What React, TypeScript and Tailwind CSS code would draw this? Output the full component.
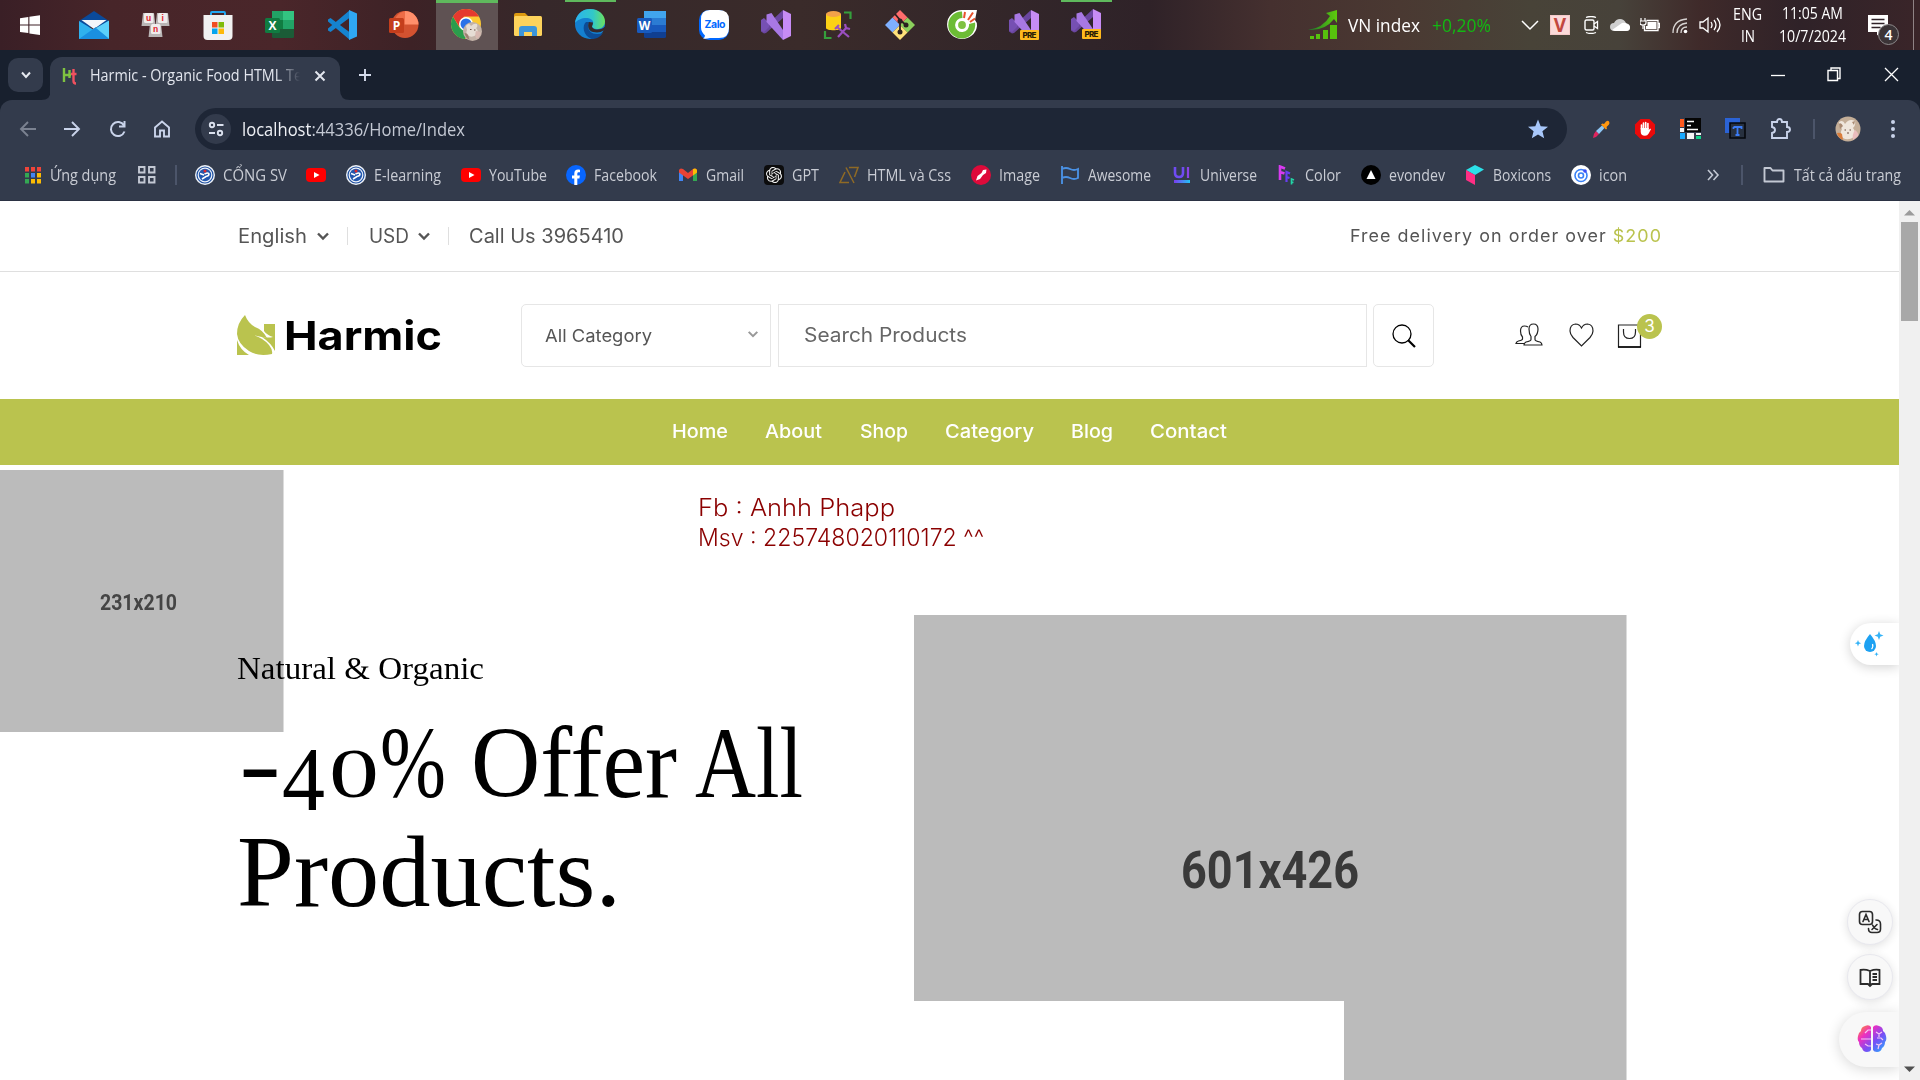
import { useLayoutEffect, useRef } from "react";
import type { ReactNode } from "react";
import { SiOpenai } from "react-icons/si";

/* One line of text condensed or widened to a fixed width. */
function Fit({ w, className = "", children }: { w: number; className?: string; children: ReactNode }) {
  const ref = useRef<HTMLSpanElement>(null);
  useLayoutEffect(() => {
    const el = ref.current;
    if (!el) return;
    el.style.transform = "none";
    const natural = el.getBoundingClientRect().width;
    el.style.transform = `scaleX(${w / natural})`;
  }, [w]);
  return (
    <span className={"block shrink-0 whitespace-nowrap " + className} style={{ width: w }}>
      <span ref={ref} className="inline-block origin-left">
        {children}
      </span>
    </span>
  );
}

function Ic({ s = 30, vb, children, className = "" }: { s?: number; vb?: string; children: ReactNode; className?: string }) {
  return (
    <svg width={s} height={s} viewBox={vb ?? `0 0 ${s} ${s}`} fill="none" className={"shrink-0 " + className}>
      {children}
    </svg>
  );
}

/* ---------- Taskbar ---------- */

const Windows = () => (
  <Ic s={22}>
    <path fill="#fff" d="M1 4.2 9.3 3v7.5H1zM10.4 2.8 21 1.2v9.3H10.4zM1 11.6h8.3v7.5L1 18zM10.4 11.6H21V21l-10.6-1.6z" />
  </Ic>
);
const Mail = () => (
  <Ic>
    <path fill="#0a4a9a" d="M0 11 15 1l15 10v6H0z" />
    <path fill="#2fb1ee" d="M0 11l15 9 15-9v18H0z" />
    <path fill="#f3f6fa" d="M2.5 10h25L15 19z" />
    <path fill="#1a8fe0" d="M0 29 17 17 30 29z" />
    <path fill="#5bd0fb" d="M17 18 30 10.500v18z" />
  </Ic>
);
const Key = ({ x, y, c }: { x: number; y: number; c: string }) => (
  <g>
    <path d={`M${x + 1} ${y}h11l1.500 13h-14z`} fill="#b9b5b5" />
    <rect x={x + 2} y={y} width="9.500" height="10" rx="1.500" fill="#efecec" />
    <text x={x + 6.7} y={y + 7.5} fontSize="8.500" fontWeight="700" textAnchor="middle" fill="#e0202a" fontFamily="Liberation Sans, sans-serif">{c}</text>
  </g>
);
const Unikey = () => (
  <Ic>
    <Key x={1} y={3} c="u" />
    <Key x={15} y={3} c="i" />
    <Key x={8} y={14} c="n" />
  </Ic>
);
const Store = () => (
  <Ic>
    <path d="M8 6V3.200Q8 2 9 2h12q1 0 1 1.200V6" stroke="#23a8f2" strokeWidth="2" />
    <path d="M0.500 5h29v21q0 4-4 4h-21q-4 0-4-4z" fill="#f1f1f1" />
    <path d="M9 12h5.500v5.500H9z" fill="#f04e23" />
    <path d="M15.500 12H21v5.500h-5.500z" fill="#80bb0a" />
    <path d="M9 18.500h5.500V24H9z" fill="#05a5ee" />
    <path d="M15.500 18.500H21V24h-5.500z" fill="#fdb90a" />
  </Ic>
);
const Letter = ({ c, fill, x, y }: { c: string; fill: string; x: number; y: number }) => (
  <g>
    <rect x={x} y={y} width="15" height="15" rx="1.500" fill={fill} />
    <text x={x + 7.5} y={y + 11.6} fontSize="12" fontWeight="700" textAnchor="middle" fill="#fff" fontFamily="Open Sans, sans-serif">{c}</text>
  </g>
);
const Excel = () => (
  <Ic>
    <rect x="7" y="1" width="22" height="27" rx="1.500" fill="#1b5c37" />
    <path d="M7 1h11v9H7z" fill="#21a366" />
    <path d="M18 1h11v9H18z" fill="#33c481" />
    <path d="M7 10h11v9H7z" fill="#107c41" />
    <path d="M18 10h11v9H18z" fill="#21a366" />
    <Letter c="X" fill="#107c41" x={0} y={8} />
  </Ic>
);
const Word = () => (
  <Ic>
    <rect x="7" y="1" width="22" height="27" rx="1.500" fill="#103f91" />
    <path d="M7 1h22v7H7z" fill="#41a5ee" />
    <path d="M7 8h22v7H7z" fill="#2b7cd3" />
    <path d="M7 15h22v7H7z" fill="#185abd" />
    <Letter c="W" fill="#185abd" x={0} y={8} />
  </Ic>
);
const VSCode = () => (
  <Ic>
    <path fill="#1583cf" d="M1 9.500 3.500 8 23 22.500V30L1 11.500z" />
    <path fill="#1583cf" d="M1 20.500 3.500 22 23 7.500V0L1 18.500z" />
    <path fill="#2fa7f2" d="M22 0l8 3.500v23L22 30z" />
  </Ic>
);
const PowerPoint = () => (
  <Ic>
    <circle cx="16" cy="14.500" r="13.500" fill="#d35230" />
    <path d="M16 1a13.500 13.500 0 0 1 13.500 13.500H16z" fill="#ff8f6b" />
    <path d="M16 1v13.500H5A13.500 13.500 0 0 1 16 1z" fill="#ed6c47" />
    <Letter c="P" fill="#c43e1c" x={0} y={8} />
  </Ic>
);
const Chrome = () => (
  <Ic s={32}>
    <circle cx="16" cy="15" r="15" fill="#fcc934" />
    <path d="M3 7.500A15 15 0 0 0 15 30l7-11-6-4-6.500 3.500z" fill="#2a9d4d" />
    <path d="M3 7.500a15 15 0 0 1 26 0H14L9.500 18z" fill="#e5392f" />
    <circle cx="16" cy="15" r="7" fill="#fff" />
    <circle cx="16" cy="15" r="5.500" fill="#2a72e8" />
    <circle cx="22.500" cy="22.500" r="9.500" fill="#c3b3a8" />
    <path d="M16 17q3-4 5 0 3-3 6-2 1 3-1 4 3 3 1 6-4 4-8 2-4-2-2-6z" fill="#e6ddd5" />
    <path d="M14.500 24q3 0 4 3l1 4q-4-2-5-7z" fill="#9c7f70" />
    <path d="M26 22q4 0 5 2-1 4-4 6-3-3-1-8z" fill="#d8b9b2" />
    <path d="M20 20.500h1.500M24 21h1.500" stroke="#6b5147" strokeWidth="1.200" />
  </Ic>
);
const Explorer = () => (
  <Ic>
    <path d="M1 5q0-2 2-2h9l3 3v4H1z" fill="#dc9a10" />
    <rect x="1" y="6" width="28" height="20" rx="1.500" fill="#fdd35c" />
    <path d="M6 26v-7q0-3 3-3h12q3 0 3 3v7h-5v-4H11v4z" fill="#3c95da" />
  </Ic>
);
const Edge = () => (
  <Ic>
    <defs>
      <linearGradient id="edgeTop" x1="0" x2="1">
        <stop stopColor="#2bb3ee" />
        <stop offset=".6" stopColor="#32c8c8" />
        <stop offset="1" stopColor="#6be15e" />
      </linearGradient>
    </defs>
    <circle cx="15" cy="15" r="15" fill="#1480d0" />
    <path d="M0 14C1 6 7 0 15 0c9 0 15 6 15 12.500 0 5-4 7.500-8 7.500-3 0-5-1-5-2.500 0-1 1.200-1.500 1.200-4S15 9 11 9 2 11 0 14z" fill="url(#edgeTop)" />
    <path d="M11 13c-4 3-3.500 14 6 17 5 0 9-3 11-6-9 3-15-1-15-7 0-2 .5-3 1.500-4z" fill="#0c4c96" />
    <path d="M14 13c-2 4-.5 9 4 10 4 1 8 .5 10.500-1.500L31 25v-9c-2 4-6 4.500-9 4.500-3 0-5-1.500-5-3 0-1 1-2 1-4z" fill="#36292a" />
  </Ic>
);
const Zalo = () => (
  <Ic>
    <rect x="0" y="0" width="30" height="30" rx="10" fill="#0068ff" />
    <path d="M11 0h9q10 0 10 10v8q0 10-10 10h-9q-4 1-7 .5 2-1 2-3-4-4-4-8V10Q1.500 0 11 0z" fill="#fff" />
    <text x="16" y="17.500" fontSize="10.500" fontWeight="700" textAnchor="middle" textLength="21" fill="#0068ff" fontFamily="Inter, sans-serif">Zalo</text>
  </Ic>
);
const VisualStudio = ({ pre = false }: { pre?: boolean }) => (
  <Ic>
    <path d="M22 0v8L5 23l-2 .500-3-2V19l6-4z" fill="#6a469f" />
    <path d="M0 10 3 8l5 5v4l-5 5-3-1.500z" fill="#7650b3" />
    <path d="M5.500 4.500 10.500 3 22 20v10L5.500 12z" fill="#a878e4" />
    <path d="M22 0l8 4v22l-8 4z" fill="#c78cf5" />
    {pre && (
      <g>
        <rect x="11" y="20" width="19" height="10" rx="1" fill="#ffb91d" />
        <text x="20.500" y="28" fontSize="8" fontWeight="800" textAnchor="middle" textLength="14" fill="#2a1c05" fontFamily="Inter, sans-serif">PRE</text>
      </g>
    )}
  </Ic>
);
const Ssms = () => (
  <Ic>
    <path d="M3 4v14c0 3 15 3 15 0V4z" fill="#fcd116" />
    <ellipse cx="10.500" cy="4" rx="7.500" ry="3" fill="#f2a24a" />
    <path d="M21 2.500h6.500V9M2 21v7h6.500" stroke="#35a03c" strokeWidth="2.200" />
    <path d="M14 17l12 10M24 17 15 27M12 19l4-4M22 14l1 4 4 1" stroke="#9a4fc0" strokeWidth="2.200" />
  </Ic>
);
const Git = () => (
  <Ic>
    <path d="M15 0l7.500 7.500L15 15 7.500 7.500z" fill="#ff6d6d" />
    <path d="M7.500 7.500 15 15l-7.500 7.500L0 15z" fill="#7fb0ff" />
    <path d="M22.500 7.500 30 15l-7.500 7.500L15 15z" fill="#8bd05c" />
    <path d="M15 15l7.500 7.500L15 30l-7.500-7.500z" fill="#ffe27a" />
    <path d="M10 4l5 6v13M15 10l6 5" stroke="#2b2020" strokeWidth="1.800" />
    <circle cx="15" cy="11" r="2.500" fill="#2b2020" />
    <circle cx="21" cy="15" r="2.500" fill="#2b2020" />
    <circle cx="15" cy="22" r="2.500" fill="#2b2020" />
  </Ic>
);
const CocCoc = () => (
  <Ic>
    <path d="M15 0h15l-2 10q2 2 2 6A15 14.500 0 1 1 15 0z" fill="#fff" />
    <path d="M15 1.500a13.500 13.500 0 1 0 13 11l-6 1.500a7 7 0 1 1-6.500-6z" fill="#6cbc35" />
    <circle cx="15" cy="15" r="5" stroke="#fff" strokeWidth="2.200" fill="#7fc241" />
    <path d="M17 8l1-6M21 10l5-7.500M23 12l5-3.500" stroke="#e8522d" strokeWidth="2" />
  </Ic>
);

type App = { icon: ReactNode; active?: boolean; open?: boolean };
const apps: App[] = [
  { icon: <Mail /> },
  { icon: <Unikey /> },
  { icon: <Store /> },
  { icon: <Excel /> },
  { icon: <VSCode /> },
  { icon: <PowerPoint /> },
  { icon: <Chrome />, active: true },
  { icon: <Explorer /> },
  { icon: <Edge />, open: true },
  { icon: <Word /> },
  { icon: <Zalo /> },
  { icon: <VisualStudio /> },
  { icon: <Ssms /> },
  { icon: <Git /> },
  { icon: <CocCoc /> },
  { icon: <VisualStudio pre /> },
  { icon: <VisualStudio pre />, open: true },
];

function Taskbar() {
  return (
    <div className="flex h-[50px] bg-[linear-gradient(90deg,#3a1f26_0,#472529_110px,#4a262a_280px,#3d2226_410px,#36282a_540px,#3a2b2a_800px,#302429_1090px,#2f2228_1150px,#45302f_1270px,#4a3932_1400px,#484338_1530px,#47423a_1620px,#3f2a2a_1700px,#2f2228_1800px,#3a2529_1920px)] font-['Open_Sans',sans-serif] text-white">
      <div className="flex w-[64px] items-center justify-center pr-[4px]">
        <Windows />
      </div>
      {apps.map((a, i) => (
        <div
          key={i}
          className={
            "flex w-[62px] items-center justify-center border-t-[3px] pb-[3px] pr-[2px] " +
            (a.active ? "border-[#5fb95d] bg-[#5f5253]" : "border-transparent")
          }
        >
          {a.open ? (
            <div className="-mt-[3px] flex h-[50px] w-[51px] items-center justify-center border-t-[3px] border-[#5fb95d] pb-[3px]">{a.icon}</div>
          ) : (
            a.icon
          )}
        </div>
      ))}
      <div className="ml-[191px] flex items-center">
        <Ic s={30} className="-ml-px">
          <defs>
            <linearGradient id="idx" x1="0" x2="1">
              <stop stopColor="#1c7a2c" />
              <stop offset="1" stopColor="#5fcb0c" />
            </linearGradient>
          </defs>
          <path d="M0 20Q15 18 22 6l-4-3L29 0v13l-3-4Q17 21 0 20z" fill="url(#idx)" />
          <path d="M2 26h4v3H2zM8 24h4v5H8zM15 20h5v9h-5zM22 15h7v14h-7z" fill="#57c20d" />
        </Ic>
        <Fit w={72} className="ml-[10px] text-[18px]">VN index</Fit>
        <Fit w={59} className="ml-[12px] text-[18px] text-[#12b812]">+0,20%</Fit>
        <Ic s={18} className="ml-[30px]">
          <path d="M1 5l8 8 8-8" stroke="#fff" strokeWidth="1.500" />
        </Ic>
        <div className="ml-[11px] flex h-[20px] w-[20px] items-center justify-center border border-[#f4c9c9] bg-[#fbdada] text-[19px] font-bold leading-none text-[#c2473f]">V</div>
        <Ic s={18} className="ml-[12px]">
          <path d="M4 1.500q5-2 10 0M4 16.500q5 2 10 0" stroke="#fff" strokeWidth="1.300" />
          <rect x="3" y="4" width="9" height="10" rx="1.500" stroke="#fff" strokeWidth="1.400" />
          <path d="M12 8l3.500-2.500v7L12 10" stroke="#fff" strokeWidth="1.300" />
        </Ic>
        <Ic s={20} className="ml-[10px]">
          <path d="M5 16q-5 0-5-4 0-4 4-4 2-4 6-4 4 0 6 4 4 1 4 4 0 4-4 4z" fill="#cfcfcf" />
          <path d="M2 15 12 8q3-1 5 1 3 1 3 3.500 0 3.500-4 3.500H5z" fill="#fff" />
        </Ic>
        <Ic s={20} className="ml-[10px]">
          <path d="M1 3v3M5 3v3M0 6h6v2q0 2-3 2t-3-2zM3 10v4" stroke="#fff" strokeWidth="1.200" />
          <path d="M6.500 5.500H18v10H4.500v-5M18.500 8.500h1v4h-1" stroke="#fff" strokeWidth="1.300" />
          <path d="M7.500 7H16.500v7H6v-3h1.500z" fill="#fff" />
        </Ic>
        <Ic s={18} className="ml-[11px]">
          <g stroke="#d8d4d2" strokeWidth="1.300">
            <path d="M2 17Q2 4 16 3M6 17q0-9 10-10M10 17q0-6 6-6" />
          </g>
          <circle cx="14.500" cy="15.500" r="1.800" fill="#fff" />
        </Ic>
        <Ic s={22} className="ml-[10px]">
          <path d="M1 8h3l5-4v14l-5-4H1zM12 8q2 3 0 6M15 6q4 5 0 10M18 4q6 7 0 14" stroke="#fff" strokeWidth="1.300" />
        </Ic>
      </div>
      <div className="ml-[12px] flex flex-col items-center pt-[3px] text-[15.500px] leading-[22px]">
        <Fit w={29}>ENG</Fit>
        <Fit w={14}>IN</Fit>
      </div>
      <div className="ml-[17px] flex flex-col items-center pt-[2px] text-[15.500px] leading-[22.500px]">
        <Fit w={61}>11:05 AM</Fit>
        <Fit w={67}>10/7/2024</Fit>
      </div>
      <div className="relative ml-[22px] flex w-[46px] border-r border-[#8f8385]">
        <Ic s={22} className="mt-[14px]">
          <path d="M0 1h20v17h-7l-4 3.500V18H0z" fill="#fff" />
          <path d="M3.500 5.500h13M3.500 9.500h13M3.500 13.500h9" stroke="#2f2228" strokeWidth="1.400" />
        </Ic>
        <div className="absolute left-[10px] top-[24px] flex h-[21px] w-[21px] items-center justify-center rounded-full border border-[#8d8a8c] bg-[#3b3437] text-[14px] font-semibold leading-none">4</div>
      </div>
    </div>
  );
}

/* ---------- Browser ---------- */

function TabStrip() {
  return (
    <div className="flex h-[50px] items-end bg-[#18202e]">
      <div className="mb-[8px] ml-[8px] flex h-[34px] w-[35px] items-center justify-center rounded-[10px] bg-[#333b4c]">
        <Ic s={14}>
          <path d="M3 4.500l4 4.500 4-4.500" stroke="#e6e9f0" strokeWidth="2" />
        </Ic>
      </div>
      <Ic s={10} className="-mr-px ml-[-2px]">
        <path d="M10 0v10H0Q10 10 10 0z" fill="#333b4c" />
      </Ic>
      <div className="flex h-[43px] w-[290px] items-center rounded-t-[12px] bg-[#333b4c] pb-[6px] pl-[12px] font-['Open_Sans',sans-serif] text-[15.500px] text-[#e3e6ee]">
        <Ic s={18}>
          <path d="M2 1v14M2 8h7M7.500 3v8" stroke="#7fc241" strokeWidth="2.400" />
          <path d="M11.500 2v12q0 2.500 2.500 2.500M9 7h5.500" stroke="#f0515f" strokeWidth="2.400" />
        </Ic>
        <div className="ml-[10px] w-[214px] shrink-0 pt-px [mask-image:linear-gradient(90deg,#000_186px,transparent_210px)]">
          <Fit w={212}>Harmic - Organic Food HTML Te</Fit>
        </div>
        <Ic s={14} className="ml-[9px]">
          <path d="M2.500 2.500l9 9m0-9l-9 9" stroke="#e3e6ee" strokeWidth="2" />
        </Ic>
      </div>
      <Ic s={10}>
        <path d="M0 0v10h10Q0 10 0 0z" fill="#333b4c" />
      </Ic>
      <Ic s={16} className="mb-[17px] ml-[7px]">
        <path d="M8 2v12M2 8h12" stroke="#d5dcec" strokeWidth="1.900" />
      </Ic>
      <div className="mb-[18px] ml-auto mr-[21px] flex items-center gap-[42px]">
        <Ic s={14}>
          <path d="M0 7.500h14" stroke="#fff" strokeWidth="1.300" />
        </Ic>
        <Ic s={15}>
          <path d="M1 3.500h9.500v10H1zM4 3V1h9v10.500h-2" stroke="#fff" strokeWidth="1.400" />
        </Ic>
        <Ic s={15}>
          <path d="M1 1l13 13m0-13L1 14" stroke="#fff" strokeWidth="1.300" />
        </Ic>
      </div>
    </div>
  );
}

function Toolbar() {
  return (
    <div className="flex h-[50px] items-center bg-[#333b4c] pt-[8px] font-['Open_Sans',sans-serif]">
      <Ic s={18} className="ml-[19px]">
        <path d="M17 9H2m7-7L2 9l7 7" stroke="#7b8291" strokeWidth="1.900" />
      </Ic>
      <Ic s={18} className="ml-[26px]">
        <path d="M1 9h15M9 2l7 7-7 7" stroke="#c9d3ea" strokeWidth="1.900" />
      </Ic>
      <Ic s={18} className="ml-[28px]">
        <path d="M15.500 11.500A7 7 0 1 1 15 5.500M15.500 1v5.500H10" stroke="#c9d3ea" strokeWidth="2" />
      </Ic>
      <Ic s={18} className="ml-[26px]">
        <path d="M2 7.500 9 1.500l7 6v9h-5v-6H7v6H2z" stroke="#c9d3ea" strokeWidth="1.900" />
      </Ic>
      <div className="ml-[24px] flex h-[42px] w-[1372px] items-center rounded-full bg-[#1e2636] pl-[6px]">
        <div className="flex h-[30px] w-[30px] items-center justify-center rounded-full bg-[#333b4c]">
          <Ic s={18}>
            <g stroke="#dbe1ee" strokeWidth="1.900">
              <circle cx="5" cy="5" r="2.200" />
              <path d="M10 5h6.500M2 13h6" />
              <circle cx="13" cy="13" r="2.200" />
            </g>
          </Ic>
        </div>
        <Fit w={223} className="ml-[11px] text-[18.500px] text-[#c3c8d3]">
          <span className="text-[#eef0f5]">localhost</span>:44336/Home/Index
        </Fit>
        <Ic s={22} className="ml-auto mr-[18px]">
          <path d="M11 1.500l2.700 6.700 7.300.5-5.600 4.600 1.800 7L11 16.500l-6.200 3.800 1.800-7L1 8.700l7.300-.5z" fill="#a8c7fa" />
        </Ic>
      </div>
      <Ic s={20} className="ml-[24px]">
        <path d="M2 19q0-4 3-7l3 3q-2 3-6 4z" fill="#e0245e" />
        <path d="M5 12 11 6.500l2.500 2.500L8 15z" fill="#8fc7f5" />
        <path d="M10 5.500l1.500-1 1.500.5 2-2.500q2-1.500 3 0t0 3L15.500 8l.5 1.500-1 1z" fill="#ff9811" />
      </Ic>
      <Ic s={22} className="ml-[23px]">
        <path d="M6.500 1h9L21 6.500v9L15.500 21h-9L1 15.500v-9z" fill="#ea0a0a" />
        <path d="M7.500 11V7M9.500 11V5M11.700 11V4.500M13.900 11V5.500" stroke="#fff" strokeWidth="1.600" strokeLinecap="round" />
        <path d="M6.700 10h8v2l1.500-1.500.8.700-2.500 4.500q-1 2-3.500 2-4.300 0-4.300-4z" fill="#fff" />
      </Ic>
      <Ic s={22} className="ml-[24px]">
        <path d="M5 0h16v14H5z" fill="#050505" />
        <path d="M0 1h4v8H0z" fill="#ff5a1f" />
        <path d="M0 10h4v4H0zM7 15h7v6H7z" fill="#f4f4f4" />
        <path d="M0 15h5v6H0z" fill="#1aa9ff" />
        <path d="M16 15h5v2h-5z" fill="#f4f4f4" />
        <path d="M16 18h5v3h-5z" fill="#0fd58b" />
        <path d="M7 3.500h7M7 7.500h4M7 11.500h11" stroke="#fff" strokeWidth="1.300" />
      </Ic>
      <Ic s={22} className="ml-[23px]">
        <path d="M0 0h15v5H5v10H0z" fill="#2b63d6" />
        <path d="M5 5h15v15H5z" fill="#27303f" stroke="#05070c" strokeWidth="1.600" />
        <path d="M8.500 9h8v2M8.500 11V9m4 0v8m-2 0h4" stroke="#3b7bf5" strokeWidth="1.800" />
      </Ic>
      <Ic s={24} className="ml-[22px]">
        <path d="M3 5h5q0-3 2.500-3T13 5h5v5q3 0 3 2.500T18 15v6H3v-5q3-.5 3-3t-3-3z" stroke="#c9d3ea" strokeWidth="1.900" />
      </Ic>
      <div className="ml-[20px] h-[20px] w-[2px] bg-[#4c556a]" />
      <Ic s={26} className="ml-[20px]">
        <circle cx="13" cy="13" r="12.500" fill="#c4ae98" />
        <path d="M4 6q4-3 6 2 4-6 10-3 1 4-2 7 4 5 1 9-6 4-11 1-4-4-1-9-3-3-3-7z" fill="#efe6dc" />
        <path d="M2 17q3-1 5 1l1 6q-5-2-6-7z" fill="#d97d3c" />
        <path d="M20 14q4 3 3 6l-5 4q-1-6 2-10z" fill="#e9bcbc" />
        <path d="M4 8q2-2 4 2l-3 3zM17 6l3-1-1 4z" fill="#a98a72" />
        <path d="M9.500 14h1.500M14.500 14H16M12 17h2" stroke="#6b4b3c" strokeWidth="1.200" />
      </Ic>
      <Ic s={20} className="ml-[22px]">
        <g fill="#c9d3ea">
          <circle cx="10" cy="3" r="2" />
          <circle cx="10" cy="10" r="2" />
          <circle cx="10" cy="17" r="2" />
        </g>
      </Ic>
    </div>
  );
}

const YouTube = () => (
  <Ic s={20}>
    <rect x="0" y="3" width="20" height="14" rx="4" fill="#f00" />
    <path d="M8 7l5.500 3L8 13z" fill="#fff" />
  </Ic>
);
const School = () => (
  <Ic s={20}>
    <circle cx="10" cy="10" r="10" fill="#eef2f8" />
    <circle cx="10" cy="10" r="8" stroke="#1d4fa0" strokeWidth="1.200" />
    <circle cx="10" cy="10" r="6.200" fill="#2257ae" />
    <path d="M5 8.500l4 1.500M9.500 9q4-2 4.500 0 0 2-3 2.500l-4 2.500" stroke="#fff" strokeWidth="1.500" />
    <circle cx="10" cy="6" r="1.500" fill="#e02b2b" />
  </Ic>
);

const appDots = ["#f0453a", "#f0453a", "#f0453a", "#34a853", "#4285f4", "#fbbc04", "#34a853", "#fbbc04", "#fbbc04"];

function Mark({ gap, w, children, label }: { gap: number; w?: number; children: ReactNode; label?: string }) {
  return (
    <div className="flex items-center" style={{ marginLeft: gap }}>
      {children}
      {label && w && <Fit w={w} className="ml-[8px] pt-[2px]">{label}</Fit>}
    </div>
  );
}

function Bookmarks() {
  return (
    <div className="flex h-[51px] items-center border-b border-[#2b3243] bg-[#333b4c] font-['Open_Sans',sans-serif] text-[15.500px] text-[#c9ccd4]">
      <Mark gap={24} w={66} label="Ứng dụng">
        <Ic s={18}>
          {appDots.map((c, i) => (
            <rect key={i} x={1 + (i % 3) * 6} y={1 + Math.floor(i / 3) * 6} width="4" height="4.500" fill={c} />
          ))}
        </Ic>
      </Mark>
      <Mark gap={21}>
        <Ic s={20}>
          <path d="M2 2h5.500v5.500H2zM12 2h5.500v5.500H12zM2 12h5.500v5.500H2zM12 12h5.500v5.500H12z" stroke="#c3c8d3" strokeWidth="1.900" />
        </Ic>
      </Mark>
      <div className="ml-[18px] h-[20px] w-[2px] bg-[#4c556a]" />
      <Mark gap={18} w={64} label="CỔNG SV"><School /></Mark>
      <Mark gap={19}><YouTube /></Mark>
      <Mark gap={20} w={67} label="E-learning"><School /></Mark>
      <Mark gap={20} w={58} label="YouTube"><YouTube /></Mark>
      <Mark gap={19} w={63} label="Facebook">
        <Ic s={20}>
          <circle cx="10" cy="10" r="10" fill="#0866ff" />
          <path d="M8.300 20v-6.500H6v-3h2.300V8.800C8.300 6 9.700 4.600 12.200 4.600q1 0 1.800.2v2.500h-1.200c-1.200 0-1.500.6-1.500 1.600v1.600h2.600l-.5 3h-2.100V20z" fill="#fff" />
        </Ic>
      </Mark>
      <Mark gap={21} w={38} label="Gmail">
        <Ic s={20}>
          <path d="M1 5v11h4V8z" fill="#4285f4" />
          <path d="M15 8v8h4V5z" fill="#34a853" />
          <path d="M1 5q1-2.500 4-1l5 4 5-4q3-1.500 4 1v2.500L10 14 1 7.500z" fill="#ea4335" />
          <path d="M15 4q3-1.500 4 1v2.500l-4 3z" fill="#fbbc04" />
        </Ic>
      </Mark>
      <Mark gap={20} w={27} label="GPT">
        <div className="flex h-[20px] w-[20px] items-center justify-center rounded-[4px] bg-[#0c0c0d] text-[#f2f2f2]"><SiOpenai size={16} /></div>
      </Mark>
      <Mark gap={20} w={84} label="HTML và Css">
        <Ic s={20}>
          <path d="M7 2.500 15 18M6 7 1 17.500h9M10 2.500h9L15.500 12" stroke="#8f6a25" strokeWidth="1.500" />
        </Ic>
      </Mark>
      <Mark gap={20} w={41} label="Image">
        <Ic s={20}>
          <circle cx="10" cy="10" r="10" fill="#de0a3a" />
          <path d="M5 15.500l1.500-4.500 4-3 1.500-3 3.500-.5L15 8l-3 2-3 4z" fill="#fff" />
        </Ic>
      </Mark>
      <Mark gap={20} w={63} label="Awesome">
        <Ic s={20}>
          <path d="M2 1v18M2 4q4-2 8 0t8 0v9q-4 2-8 0t-8 0" stroke="#4a90e2" strokeWidth="1.900" />
        </Ic>
      </Mark>
      <Mark gap={21} w={57} label="Universe">
        <Ic s={20}>
          <defs>
            <linearGradient id="uni" x1="0" x2="1">
              <stop stopColor="#7a3bf0" />
              <stop offset="1" stopColor="#21c4f5" />
            </linearGradient>
          </defs>
          <path d="M3 2v6q0 4 4 4t4-4V2" stroke="#6f4bf2" strokeWidth="2.600" />
          <path d="M16 2v11" stroke="#8c43e8" strokeWidth="2.200" />
          <path d="M2 15h16v3H2z" fill="url(#uni)" />
        </Ic>
      </Mark>
      <Mark gap={20} w={36} label="Color">
        <Ic s={20}>
          <path d="M3 15V1.500L8 3.500M3 7l4.500 1.500" stroke="#d83af0" strokeWidth="2.600" />
          <path d="M9.500 17V7l3.500 1.500M9.500 12l3 1" stroke="#6a3df0" strokeWidth="2.200" />
          <path d="M14.500 19.500V14l2.500 1M14 17l2.500.5" stroke="#22d3a5" strokeWidth="1.600" />
        </Ic>
      </Mark>
      <Mark gap={20} w={56} label="evondev">
        <Ic s={20}>
          <circle cx="10" cy="10" r="10" fill="#000" />
          <path d="M10 5l4.500 9h-9z" fill="#fff" />
        </Ic>
      </Mark>
      <Mark gap={20} w={58} label="Boxicons">
        <Ic s={20}>
          <path d="M10 0l9 4.500L10 10 1 5z" fill="#2ce0e8" />
          <path d="M1 5l9 5v10l-9-5z" fill="#ff2e84" />
        </Ic>
      </Mark>
      <Mark gap={20} w={28} label="icon">
        <Ic s={20}>
          <circle cx="10" cy="10" r="10" fill="#fff" />
          <circle cx="10" cy="10.500" r="6" stroke="#3b82f6" strokeWidth="1.600" />
          <circle cx="10" cy="10.500" r="2.500" stroke="#3b82f6" strokeWidth="1.600" />
          <circle cx="14" cy="6" r="1.800" fill="#3b4df6" />
        </Ic>
      </Mark>
      <Ic s={14} className="ml-auto">
        <path d="M2 2l4.500 5L2 12M7.500 2 12 7l-4.500 5" stroke="#c3c8d3" strokeWidth="1.600" />
      </Ic>
      <div className="ml-[21px] mr-[20px] h-[20px] w-[2px] bg-[#4c556a]" />
      <Ic s={22}>
        <path d="M1.500 17.500V4h6l2 2.500h11v11z" stroke="#c3c8d3" strokeWidth="1.900" strokeLinejoin="round" />
      </Ic>
      <Fit w={107} className="ml-[9px] mr-[19px] pt-[2px]">Tất cả dấu trang</Fit>
    </div>
  );
}

/* ---------- Shop page ---------- */

const Caret = ({ c = "#555", s = 14 }: { c?: string; s?: number }) => (
  <Ic s={s} vb="0 0 14 14">
    <path d="M2 4.500l5 5 5-5" stroke={c} strokeWidth="2.400" />
  </Ic>
);

function TopBar() {
  return (
    <div className="flex h-[71px] items-center border-b border-[#dfdfdf] pl-[238px] pr-[237px] font-[Inter,sans-serif] text-[19.500px] text-[#555]">
      <Fit w={69} className="pt-px">English</Fit>
      <div className="ml-[9px]"><Caret /></div>
      <div className="ml-[17px] h-[18px] w-px bg-[#dfdfdf]" />
      <Fit w={40} className="ml-[21px] pt-px">USD</Fit>
      <div className="ml-[8px]"><Caret /></div>
      <div className="ml-[17px] h-[18px] w-px bg-[#dfdfdf]" />
      <Fit w={155} className="ml-[20px] pt-px">Call Us 3965410</Fit>
      <Fit w={312} className="ml-auto text-[17.500px] tracking-[1px]">
        Free delivery on order over <span className="text-[#bac34e]">$200</span>
      </Fit>
    </div>
  );
}

function SearchHeader() {
  return (
    <div className="flex h-[127px] items-center pl-[237px] font-[Inter,sans-serif]">
      <svg width="39" height="41" viewBox="0 0 39 41" className="shrink-0">
        <path d="M27 9h11v27q-4-8-13-14 7 1 11 0-6-2-9-6z" fill="#bac34e" />
        <path d="M8 0q3 8 10 12 8 3 12 11-7-1-14-3 10 3 16 10 4 5 3 9-14 3-23-3Q1 29 0 19 0 8 8 0z" fill="#bac34e" />
        <path d="M0 25q3 10 12 15H0z" fill="#bac34e" />
      </svg>
      <Fit w={158} className="ml-[8px] text-[40px] font-bold leading-[42px] text-black">Harmic</Fit>
      <div className="ml-[79px] flex h-[63px] w-[250px] items-center rounded-l-[5px] border border-[#e6e6e6] pl-[23px] pr-[11px] text-[17.500px] text-[#555]">
        <Fit w={107} className="pt-[2px]">All Category</Fit>
        <div className="ml-auto pb-[4px]"><Caret c="#999" s={12} /></div>
      </div>
      <div className="ml-[7px] flex h-[63px] w-[589px] items-center border border-[#e6e6e6] pl-[25px] text-[19.500px] text-[#666]">
        <Fit w={163}>Search Products</Fit>
      </div>
      <div className="ml-[6px] flex h-[63px] w-[61px] items-center justify-center rounded-[5px] border border-[#e6e6e6]">
        <Ic s={24}>
          <circle cx="10" cy="10" r="9" stroke="#000" strokeWidth="1.300" />
          <path d="M16 16l7 7" stroke="#000" strokeWidth="2.200" />
        </Ic>
      </div>
      <svg width="29" height="24" viewBox="0 0 29 24" fill="none" stroke="#222" strokeWidth="1.200" className="ml-[81px] mb-px shrink-0">
        <path d="M18.500 1q-4.500 0-4.500 5 0 5 2 7.500v3q0 1.500-5 2.500-2 1-2 3h18q0-2-2-3-5-1-5-2.500v-3Q23 11 23 6q0-5-4.500-5z" />
        <path d="M13 4q-1.500-1-3.500-1Q5.500 3 5.500 8q0 4 2 6v2q0 1.200-4 2-2 .5-2.500 2.500h8" />
      </svg>
      <svg width="28" height="24" viewBox="0 0 28 24" fill="none" stroke="#222" strokeWidth="1.200" className="mb-px ml-[24px] shrink-0">
        <path d="M13.500 5q-2-4-6-4Q2 1.500 2 8q0 3 3 6.500l8.500 8.500 8.500-8.500q3-3.500 3-6.500 0-6.500-5.500-7-4 0-6 4z" />
      </svg>
      <div className="relative ml-[21px]">
        <svg width="26" height="24" viewBox="0 0 26 24" fill="none" stroke="#222" className="shrink-0">
          <path d="M1.500 1h22v22h-22z" strokeWidth="1.200" />
          <path d="M6.500 5v3q0 6.500 6 6.500t6-6.500V5" strokeWidth="1.200" />
          <path d="M1 23h23" stroke="#000" strokeWidth="1.500" />
        </svg>
        <div className="absolute -top-[10px] left-[20px] flex h-[25px] w-[25px] items-center justify-center rounded-full bg-[#bac34e] text-[17px] leading-none text-white">3</div>
      </div>
    </div>
  );
}

function Nav() {
  return (
    <div className="flex h-[66px] items-center bg-[#bac34e] pl-[672px] font-[Inter,sans-serif] text-[18.500px] font-medium text-white">
      <Fit w={56}>Home</Fit>
      <Fit w={57} className="ml-[37px]">About</Fit>
      <Fit w={48} className="ml-[38px]">Shop</Fit>
      <Fit w={89} className="ml-[37px]">Category</Fit>
      <Fit w={42} className="ml-[37px]">Blog</Fit>
      <Fit w={77} className="ml-[37px]">Contact</Fit>
    </div>
  );
}

function Hero() {
  return (
    <div className="relative h-[615px] overflow-hidden">
      <div className="absolute left-0 top-[5px] flex h-[262px] w-[284px] items-center justify-center border-r border-[#dcdcdc] bg-[#bbb] pr-[7px] pt-[4px] font-[Roboto,sans-serif] text-[21.500px] font-bold text-[#454545]">
        <Fit w={77}>231x210</Fit>
      </div>
      <div className="h-[150px] pl-[698px] pt-[28px] font-[Inter,sans-serif] text-[23.500px] leading-[30px] text-[#8b0000]">
        <Fit w={197} className="font-light">Fb : Anhh Phapp</Fit>
        <Fit w={286} className="font-light">Msv : 225748020110172 ^^</Fit>
      </div>
      <div className="flex">
        <div className="relative w-[914px] pl-[237px] pt-[31px] font-['Liberation_Serif',serif] text-black">
          <Fit w={247} className="text-[32px] leading-[44px]">Natural &amp; Organic</Fit>
          <div className="mt-[19px] flex h-[109px] text-[101px] leading-[109px]">
            <Fit w={42} className="ml-[2px]">-</Fit>
            <Fit w={43} className="ml-px pt-[16px] text-[90px]">4</Fit>
            <Fit w={50} className="ml-[4px] pt-[10px] text-[70px]">0</Fit>
            <Fit w={66} className="ml-px">%</Fit>
            <Fit w={206} className="ml-[25px]">Offer</Fit>
            <Fit w={108} className="ml-[18px]">All</Fit>
          </div>
          <Fit w={384} className="text-[101px] leading-[109px]">Products.</Fit>
        </div>
        <div className="flex w-[713px] flex-col">
          <div className="flex h-[386px] items-end justify-center border-r border-[#dcdcdc] bg-[#bbb] pb-[100px] font-[Roboto,sans-serif] text-[52px] font-bold leading-[60px] text-[#3a3a3a]">
            <Fit w={178}>601x426</Fit>
          </div>
          <div className="h-[79px] w-[283px] self-end border-r border-[#dcdcdc] bg-[#bbb]" />
        </div>
      </div>
    </div>
  );
}

function FloatingTools() {
  return (
    <>
      <div className="absolute right-0 top-[422px] flex h-[42px] w-[49px] items-center rounded-l-full bg-white pl-[4px] pt-[2px] shadow-[0_2px_12px_rgba(0,0,0,0.18)]">
        <Ic s={30}>
          <path d="M16 4q6 7 6 12a6 6 0 0 1-12 0q0-5 6-12z" fill="#1da1f2" />
          <path d="M18.500 14q1 3-1 5" stroke="#fff" strokeWidth="1.200" />
          <path d="M25 1l1.200 3.300L29.500 5.500l-3.300 1.200L25 10l-1.200-3.300L20.500 5.500l3.300-1.200zM4 10l.9 2.300 2.300.9-2.300.9L4 16.400l-.9-2.300-2.300-.9 2.300-.9zM22.500 22l.6 1.600 1.600.6-1.600.6-.6 1.600-.6-1.600-1.600-.6 1.600-.6z" fill="#35b3f7" />
        </Ic>
      </div>
      <div className="absolute right-[6px] top-[698px] flex h-[46px] w-[46px] items-center justify-center rounded-full border border-[#e8e8ee] bg-[#f8f8f8] shadow-[0_2px_10px_rgba(0,0,0,0.12)]">
        <Ic s={24}>
          <g stroke="#2b2b2b" strokeWidth="1.600" strokeLinecap="round">
            <rect x="1.500" y="1.500" width="13" height="13" rx="3" />
            <path d="M5 11.500 8 4.500l3 7M6 9.500h4M18 10q4.500 0 4.500 4v5q0 3.500-3.500 3.500h-5q-3.500 0-3.500-4M14 19.500l5-5M14.500 15q2 4 5 4.500" />
          </g>
        </Ic>
      </div>
      <div className="absolute right-[6px] top-[753px] flex h-[46px] w-[46px] items-center justify-center rounded-full border border-[#e8e8ee] bg-[#f8f8f8] pt-px shadow-[0_2px_10px_rgba(0,0,0,0.12)]">
        <Ic s={22}>
          <g stroke="#2b2b2b" strokeWidth="1.800">
            <path d="M11 4Q6 2 1.500 3v14H9l2 2 2-2h7.500V3Q16 2 11 4v14M13.500 7h4.500M13.500 10h4.500M13.500 13h4.500" />
          </g>
        </Ic>
      </div>
      <div className="absolute right-0 top-[811px] flex h-[55px] w-[60px] items-center rounded-l-full bg-[#f8f8f8] pb-px pl-[18px] shadow-[0_2px_14px_rgba(0,0,0,0.16)]">
        <Ic s={30}>
          <defs>
            <linearGradient id="brain" x1="0" y1="0" x2="1" y2="1">
              <stop stopColor="#ff9a1f" />
              <stop offset=".3" stopColor="#ee2fc0" />
              <stop offset=".6" stopColor="#7a4df5" />
              <stop offset="1" stopColor="#1fb3ff" />
            </linearGradient>
          </defs>
          <path d="M14 3q-2-3-6-1-4 1-4 5-3 2-3 5-1 4 1 6 0 4 3 6 1 4 5 4 3 0 4-2zM16 3q2-3 6-1 4 1 4 5 3 2 3 5 1 4-1 6 0 4-3 6-1 4-5 4-3 0-4-2z" fill="url(#brain)" />
          <path d="M14 6h-3l-3 3M14 15H4M14 22h-3l-3-2M19 8l3 2 3-2M22 10v3M20 14h4l2 2M19 20l3 1 3-2M22 21l-1 4" stroke="#f7c6f3" strokeWidth="1.200" />
        </Ic>
      </div>
    </>
  );
}

export default function App() {
  return (
    <div className="h-[1080px] w-[1920px] overflow-hidden bg-white">
      <Taskbar />
      <div className="bg-[#18202e]">
        <TabStrip />
        <div className="overflow-hidden rounded-t-[12px]">
          <Toolbar />
          <Bookmarks />
        </div>
      </div>
      <div className="flex h-[879px]">
        <div className="relative w-[1899px] overflow-hidden bg-white">
          <TopBar />
          <SearchHeader />
          <Nav />
          <Hero />
          <FloatingTools />
        </div>
        <div className="flex w-[21px] flex-col items-center bg-[#f0f0f0]">
          <Ic s={11} className="mt-[6px]">
            <path d="M0 8.500 5.500 3 11 8.500z" fill="#9b9b9b" />
          </Ic>
          <div className="mt-[4px] h-[99px] w-[17px] bg-[#a8a8a8]" />
          <Ic s={11} className="mb-[5px] mt-auto">
            <path d="M0 2.500 5.500 8 11 2.500z" fill="#505050" />
          </Ic>
        </div>
      </div>
    </div>
  );
}
